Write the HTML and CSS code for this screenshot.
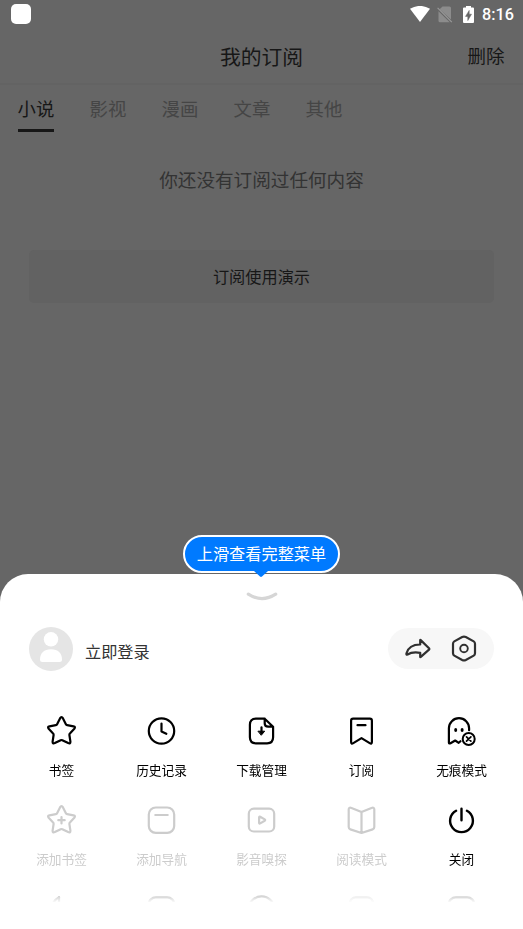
FILE: index.html
```html
<!DOCTYPE html>
<html lang="zh-CN">
<head>
<meta charset="utf-8">
<title>我的订阅</title>
<link rel="stylesheet" href="styles.css">
</head>
<body>
<svg class="defs" width="0" height="0" aria-hidden="true">
  <defs>
    <path id="star" d="M16.5 5.4Q18 2.8 19.5 5.4L22.4 11.2Q22.8 12 23.7 12.2L30 13.3Q32.4 13.8 30.8 15.8L26.4 20.5Q25.8 21.1 25.9 22L26.9 28.7Q27 31.1 24.7 30.1L18.8 27.2Q18 26.8 17.2 27.2L11.3 30.1Q9 31.1 9.1 28.7L10.1 22Q10.2 21.1 9.6 20.5L5.2 15.8Q3.6 13.8 6 13.3L12.3 12.2Q13.2 12 13.6 11.2Z"/>
  </defs>
</svg>
<div class="screen">
  <div class="page">
    <div class="status">
      <span class="notice"></span>
      <div class="status-right">
        <svg class="wifi" width="20" height="16" viewBox="0 0 20 16"><path d="M0 2.8Q10-3 20 2.8L10 16Z" fill="#fff"/></svg>
        <svg class="sim" width="16" height="17" viewBox="0 0 16 17"><path d="M5.5.5H12.5Q14 .5 14 2V13.6L2.6 3.2Z" fill="#8c8c8c"/><path d="M1.5 5.2L12.8 16.2H3Q1.5 16.2 1.5 14.7Z" fill="#8c8c8c"/><path d="M1.2 3.4L13.4 15.4" stroke="#666" stroke-width="1"/><path d="M.6 1.8L14.8 16.2" stroke="#999" stroke-width="1.2"/></svg>
        <svg class="battery" width="11" height="17" viewBox="0 0 11 17"><path d="M3 0H8V1.5H10Q11 1.5 11 2.5V16Q11 17 10 17H1Q0 17 0 16V2.5Q0 1.5 1 1.5H3Z" fill="#fff"/><path d="M6.2 4.4V8.2H8.5L4.8 14.6V10.4H2.5Z" fill="#666" stroke="#666" stroke-width=".5"/></svg>
        <span class="time">8:16</span>
      </div>
    </div>
    <div class="header">
      <span></span>
      <h1>我的订阅</h1>
      <span class="delete">删除</span>
    </div>
    <div class="tabs">
      <span class="tab active">小说</span>
      <span class="tab">影视</span>
      <span class="tab">漫画</span>
      <span class="tab">文章</span>
      <span class="tab">其他</span>
    </div>
    <p class="empty">你还没有订阅过任何内容</p>
    <div class="demo">订阅使用演示</div>
  </div>

  <div class="sheet">
    <div class="tip">
      <span>上滑查看完整菜单</span>
      <svg class="tip-arrow" width="14" height="7" viewBox="0 0 14 7"><path d="M0 0H14L8 5.6Q7 6.4 6 5.6Z" fill="#007aff"/></svg>
    </div>
    <svg class="handle" width="32" height="10" viewBox="0 0 32 10"><path d="M2.3 2.2Q16 11 29.7 2.2" fill="none" stroke="#d6d6d6" stroke-width="3.2" stroke-linecap="round"/></svg>
    <div class="account">
      <svg width="44" height="44" viewBox="0 0 44 44"><circle cx="22" cy="22" r="22" fill="#e5e5e5"/><circle cx="22" cy="12.3" r="7.2" fill="#fff"/><path d="M11 32.5C11 26 15 22.2 22 22.2S33 26 33 32.5Q33 35 30.5 35H13.5Q11 35 11 32.5Z" fill="#fff"/></svg>
      <span class="login">立即登录</span>
      <div class="actions">
        <svg width="26" height="22" viewBox="0 0 26 22"><path d="M15.2 2.2Q15.2 1.6 15.7 2.1L24 10.3Q24.6 11 24 11.6L15.8 18.9Q15.2 19.4 15.2 18.7V14.8C9.5 13.9 5.3 14.7 2.5 16.5Q1.1 17 1.5 15.3C3 9.8 7.5 6.5 15.2 6.5Z" fill="none" stroke="#303030" stroke-width="2.2" stroke-linejoin="round"/></svg>
        <svg width="26" height="27" viewBox="0 0 26 27"><path d="M11.2 2.1Q13 1.2 14.8 2.1L22.7 6.4Q24 7.2 24 8.8V18.2Q24 19.8 22.7 20.6L14.8 24.9Q13 25.8 11.2 24.9L3.3 20.6Q2 19.8 2 18.2V8.8Q2 7.2 3.3 6.4Z" fill="none" stroke="#303030" stroke-width="2.2"/><circle cx="13" cy="13.5" r="3.8" fill="none" stroke="#303030" stroke-width="1.9"/></svg>
      </div>
    </div>
    <div class="menu">
      <div class="item"><svg viewBox="0.5 0 35 36"><use href="#star"/></svg><span>书签</span></div>
      <div class="item"><svg viewBox="0.5 0 35 36"><circle cx="18" cy="18" r="12.7"/><path d="M18 10.5V18.5L22.8 20.8"/></svg><span>历史记录</span></div>
      <div class="item"><svg viewBox="0.5 0 35 36"><path d="M21.2 5.7H12.4Q6.4 5.7 6.4 11.7V24.3Q6.4 30.3 12.4 30.3H23.6Q29.6 30.3 29.6 24.3V13.7L21.2 5.7V10.2Q21.2 13.7 24.7 13.7H29.2"/><path d="M18 14.4V20"/><path d="M14.8 18.2H21.2L18 22Z" class="solid"/></svg><span>下载管理</span></div>
      <div class="item"><svg viewBox="0.5 0 35 36"><path d="M9.6 5.7H26.4Q28.4 5.7 28.4 7.7V29Q28.4 31.5 26.2 30.1L18 25.1L9.8 30.1Q7.6 31.5 7.6 29V7.7Q7.6 5.7 9.6 5.7Z"/><path d="M14 12.2H22"/></svg><span>订阅</span></div>
      <div class="item"><svg viewBox="0.5 0 35 36"><path d="M17 28.2L15.2 29.8 11.7 27.5 7 30.2Q5.4 31 5.4 29.5V15.3A10.1 10.1 0 0 1 25.6 15.3V17.2"/><ellipse cx="12.2" cy="17" rx="1.5" ry="1.9" class="dot"/><ellipse cx="18.6" cy="17" rx="1.5" ry="1.9" class="dot"/><circle cx="25.2" cy="26" r="6" class="badge"/><path class="cross" d="M23 23.8L27.4 28.2M27.4 23.8L23 28.2"/></svg><span>无痕模式</span></div>

      <div class="item off"><svg viewBox="0.5 0 35 36"><use href="#star"/><path d="M18 15V21.4M14.8 18.2H21.2"/></svg><span>添加书签</span></div>
      <div class="item off"><svg viewBox="0.5 0 35 36"><rect x="5.3" y="5.5" width="25.4" height="25.4" rx="7"/><path d="M11.8 13H24.2"/></svg><span>添加导航</span></div>
      <div class="item off"><svg viewBox="0.5 0 35 36"><rect x="5.3" y="6.7" width="25.4" height="22.8" rx="5"/><path d="M15.6 15.4Q15.6 14.2 16.7 14.8L21.2 17.4Q22.2 18.1 21.2 18.8L16.7 21.4Q15.6 22 15.6 20.8Z"/></svg><span>影音嗅探</span></div>
      <div class="item off"><svg viewBox="0.5 0 35 36"><path d="M18 10L8 6Q5.2 5 5.2 7.6V25Q5.2 26.8 6.9 27.4L18 31 29.1 27.4Q30.8 26.8 30.8 25V7.6Q30.8 5 28 6L18 10V31"/></svg><span>阅读模式</span></div>
      <div class="item"><svg viewBox="0.5 0 35 36"><path d="M12.6 8.7A11.4 11.4 0 1 0 23.4 8.7M18 6.8V18.2" class="power"/></svg><span>关闭</span></div>

      <div class="item off"><svg viewBox="0.5 0 35 36"><path d="M15.5 6.2C13 7.5 11 9.5 9 13"/><path d="M15.5 6.2V16"/></svg></div>
      <div class="item off"><svg viewBox="0.5 0 35 36"><rect x="5.3" y="6.3" width="25.4" height="24" rx="7"/></svg></div>
      <div class="item off"><svg viewBox="0.5 0 35 36"><circle cx="18" cy="18" r="12.7"/></svg></div>
      <div class="item off faint"><svg viewBox="0.5 0 35 36"><rect x="6.4" y="6.3" width="23.2" height="24" rx="6"/></svg></div>
      <div class="item off"><svg viewBox="0.5 0 35 36"><rect x="5.3" y="6.3" width="25.4" height="24" rx="7"/></svg></div>
    </div>
  </div>
</div>
</body>
</html>
```
FILE: styles.css
```css
* { box-sizing: border-box; }

body {
  margin: 0;
  font-family: "Noto Sans CJK SC", sans-serif;
  background: #666;
  overflow: hidden;
}

.defs { display: block; }

.screen {
  width: 523px;
  height: 929px;
  display: flex;
  flex-direction: column;
  overflow: hidden;
}

.page {
  height: 574px;
  flex: none;
  background: #666;
}

.status {
  height: 28px;
  padding: 0 9px 0 11px;
  display: flex;
  align-items: center;
  justify-content: space-between;
}

.notice {
  width: 20px;
  height: 20px;
  border-radius: 5px;
  background: #fff;
}

.status-right { display: flex; align-items: center; }
.wifi { margin-right: 7px; }
.sim { margin-right: 10px; }
.battery { margin-right: 8px; }

.time {
  width: 32px;
  font: 500 16.2px/28px Roboto, sans-serif;
  color: #fff;
  white-space: nowrap;
  padding-top: 2px;
}

.header {
  height: 57px;
  padding: 0 18px;
  display: grid;
  grid-template-columns: 1fr auto 1fr;
  align-items: center;
  border-bottom: 2px solid #636363;
  color: #171717;
}

.header h1 {
  margin: 0;
  font-size: 20.8px;
  line-height: 30px;
  font-weight: 400;
}

.delete {
  text-align: right;
  font-size: 18.5px;
  line-height: 30px;
  padding: 0 .6px 1px 0;
}

.tabs {
  display: flex;
  gap: 36px;
  padding: 8px 17.6px 0;
}

.tab {
  width: 36px;
  height: 39px;
  font-size: 18.4px;
  line-height: 30px;
  color: #454545;
  border-bottom: 3px solid transparent;
  white-space: nowrap;
}

.tab.active {
  color: #171717;
  border-bottom-color: #171717;
}

.empty {
  margin: 32px 0 0;
  font-size: 18.6px;
  line-height: 30px;
  text-align: center;
  color: #333;
}

.demo {
  margin: 56px 29px 0;
  height: 53px;
  border-radius: 5px;
  background: #626262;
  color: #171717;
  font-size: 16.2px;
  line-height: 52px;
  text-align: center;
}

.sheet {
  position: relative;
  flex: 1;
  background: #fff;
  border-radius: 28px 28px 0 0;
}

.tip {
  position: absolute;
  top: -39px;
  left: 183px;
  width: 157px;
  height: 38px;
  border: 2px solid #fff;
  border-radius: 19px;
  background: #007aff;
  color: #fff;
  font-size: 16.2px;
  line-height: 32px;
  text-align: center;
  white-space: nowrap;
}

.tip-arrow {
  position: absolute;
  top: 34px;
  left: 69px;
}

.handle {
  display: block;
  margin: 18px auto 0;
}

.account {
  height: 44px;
  margin: 25px 29px 0;
  display: flex;
  align-items: center;
}

.login {
  margin: 4px 0 0 12px;
  font-size: 16.2px;
  line-height: 24px;
  color: #333;
}

.actions {
  width: 106px;
  height: 41px;
  margin: -1px 0 0 auto;
  border-radius: 21px;
  background: #f7f7f7;
  display: flex;
  align-items: center;
  justify-content: center;
  gap: 20px;
}

.menu {
  height: 189px;
  margin: 42px 11.5px 0;
  display: grid;
  grid-template-columns: repeat(5, 100px);
  grid-auto-rows: 89px;
  overflow: hidden;
  -webkit-mask-image: linear-gradient(#000 182px, transparent 190px);
  mask-image: linear-gradient(#000 182px, transparent 190px);
}

.item {
  display: flex;
  flex-direction: column;
  align-items: center;
  gap: 12px;
  color: #000;
  font-size: 12.7px;
  line-height: 18px;
}

.item svg {
  width: 35px;
  height: 36px;
  flex: none;
  fill: none;
  stroke: currentColor;
  stroke-width: 2.2;
  stroke-linecap: round;
  stroke-linejoin: round;
}

.item .solid { fill: currentColor; stroke-width: 1; }
.item .dot { fill: currentColor; stroke: none; }
.item .badge { fill: #fff; stroke-width: 2; }
.item .cross { stroke-width: 1.7; }
.item .power { stroke-width: 2.4; }
.off { color: #ccc; }
.faint { opacity: .4; }
```
